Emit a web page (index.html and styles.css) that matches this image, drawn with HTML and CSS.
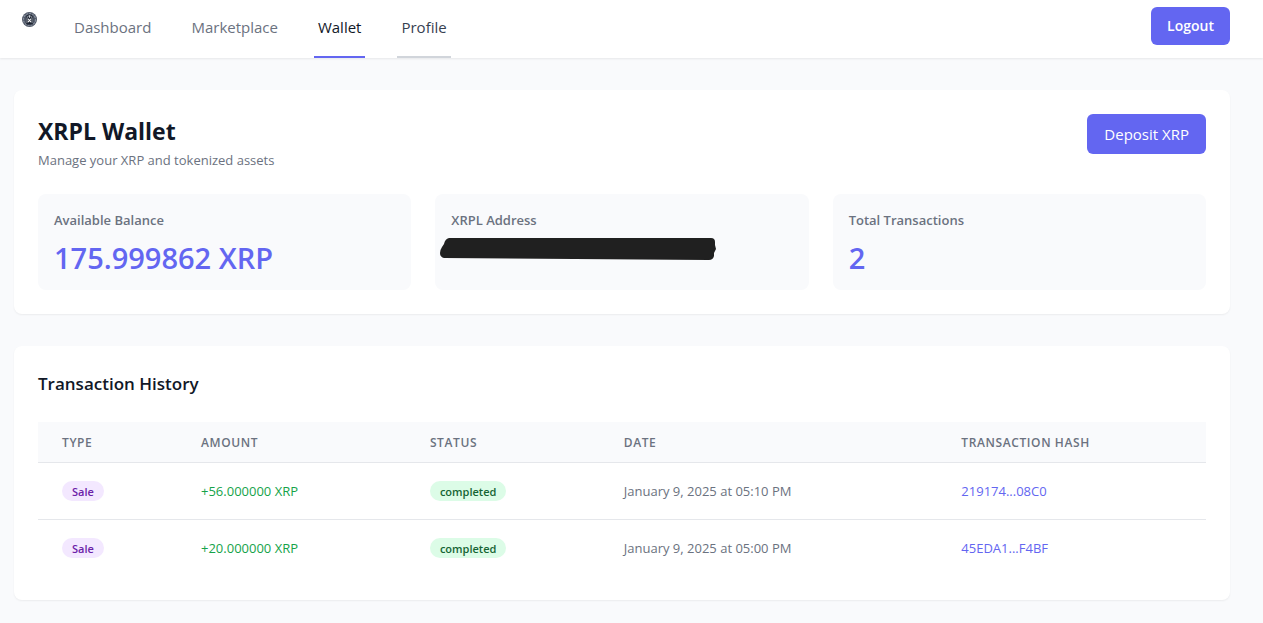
FILE: index.html
```html
<!DOCTYPE html>
<html lang="en">
<head>
<meta charset="utf-8">
<meta name="viewport" content="width=device-width, initial-scale=1">
<title>XRPL Wallet</title>
<link rel="stylesheet" href="styles.css">
</head>
<body>
<header class="topbar">
  <svg class="logo" viewBox="0 0 16 16" role="img" aria-label="Home">
    <circle cx="8" cy="8" r="8" fill="#4a5261"/>
    <circle cx="8" cy="8" r="6.4" fill="none" stroke="#858d9b" stroke-width="1.4" stroke-dasharray="2.4 .8"/>
    <path d="M4.3 13V6.2Q4.8 2.6 8 2.6t3.7 3.6V13z" fill="#1c2330"/>
    <path d="M5.3 12V6.5Q5.6 4 8 4t2.7 2.5V12" fill="none" stroke="#b6bcc6" stroke-width=".8"/>
    <path d="M8 3.6v2.6" stroke="#d5d9e0" stroke-width="1"/>
    <path d="M6.4 7.2l3.2 3.6M9.6 7.2l-3.2 3.6" stroke="#fff" stroke-width="1.1"/>
    <path d="M5.6 12.6h4.8" stroke="#1c2330" stroke-width="1.2"/>
  </svg>
  <nav class="nav">
    <a class="nav-link" href="#">Dashboard</a>
    <a class="nav-link" href="#">Marketplace</a>
    <a class="nav-link nav-link-active" href="#" aria-current="page">Wallet</a>
    <a class="nav-link nav-link-hover" href="#">Profile</a>
  </nav>
  <button class="button button-small" type="button">Logout</button>
</header>
<main class="content">
  <section class="card">
    <div class="card-head">
      <div>
        <h1 class="title">XRPL Wallet</h1>
        <p class="subtitle">Manage your XRP and tokenized assets</p>
      </div>
      <button class="button" type="button">Deposit XRP</button>
    </div>
    <div class="stats">
      <div class="stat">
        <h2 class="stat-label">Available Balance</h2>
        <p class="stat-value">175.999862 XRP</p>
      </div>
      <div class="stat">
        <h2 class="stat-label">XRPL Address</h2>
        <svg class="redaction" viewBox="0 0 276 22" role="img" aria-label="Address hidden">
          <path d="M9 0H271Q275 0 275 4V7L276 11L274 15V18Q273 22 269 22L4 20Q0 19 0 15Q0 12 2 9L4 6Q5 1 9 0Z" fill="#202020"/>
        </svg>
      </div>
      <div class="stat">
        <h2 class="stat-label">Total Transactions</h2>
        <p class="stat-value">2</p>
      </div>
    </div>
  </section>
  <section class="card">
    <h2 class="section-title">Transaction History</h2>
    <table class="table">
      <colgroup><col class="col-type"><col class="col-amount"><col class="col-status"><col class="col-date"><col class="col-hash"></colgroup>
      <thead>
        <tr><th scope="col">Type</th><th scope="col">Amount</th><th scope="col">Status</th><th scope="col">Date</th><th scope="col">Transaction Hash</th></tr>
      </thead>
      <tbody>
        <tr>
          <td><span class="badge badge-sale">Sale</span></td>
          <td class="amount">+56.000000 XRP</td>
          <td><span class="badge badge-completed">completed</span></td>
          <td>January 9, 2025 at 05:10 PM</td>
          <td><a class="hash" href="#">219174...08C0</a></td>
        </tr>
        <tr>
          <td><span class="badge badge-sale">Sale</span></td>
          <td class="amount">+20.000000 XRP</td>
          <td><span class="badge badge-completed">completed</span></td>
          <td>January 9, 2025 at 05:00 PM</td>
          <td><a class="hash" href="#">45EDA1...F4BF</a></td>
        </tr>
      </tbody>
    </table>
  </section>
</main>
</body>
</html>
```

FILE: styles.css
```css
* { box-sizing: border-box; }
body {
  margin: 0;
  background: #f9fafc;
  color: #111827;
  font-family: "Segoe UI", "Open Sans", "Noto Sans", sans-serif;
  font-size: 13px;
  line-height: 20px;
}
h1, h2, p { margin: 0; }
a { text-decoration: none; }

.topbar {
  display: flex;
  align-items: flex-start;
  padding: 0 33px 0 22px;
  background: #fff;
  box-shadow: 0 1px 2px rgba(0, 0, 0, .08);
}
.logo { width: 15px; height: 15px; margin-top: 12px; }
.nav { display: flex; gap: 32px; margin: 0 auto 0 33px; }
.nav-link {
  padding: 15px 4px 17px;
  border-bottom: 2px solid transparent;
  color: #6b7280;
  font-size: 15px;
  line-height: 24px;
}
.nav-link-active { border-color: #6366f1; color: #111827; }
.nav-link-hover { border-color: #d1d5db; color: #374151; }

.button {
  padding: 8px 17px;
  border: 0;
  border-radius: 6px;
  background: #6366f1;
  color: #fff;
  font: 400 15px/24px "Segoe UI", "Open Sans", "Noto Sans", sans-serif;
  white-space: nowrap;
}
.button-small { margin-top: 7px; padding: 9px 16px; font-size: 14px; font-weight: 600; line-height: 20px; }

.content { display: grid; gap: 32px; padding: 32px 33px 23px 14px; }
.card {
  padding: 24px;
  border-radius: 8px;
  background: #fff;
  box-shadow: 0 1px 2px rgba(0, 0, 0, .06);
}
.card-head { display: flex; justify-content: space-between; align-items: flex-start; margin-bottom: 24px; }
.title { margin-bottom: 2px; font-size: 23px; font-weight: 700; line-height: 34px; }
.subtitle { color: #6b7280; }
.stats { display: grid; grid-template-columns: repeat(3, 1fr); gap: 24px; }
.stat { position: relative; padding: 16px 16px 12px; border-radius: 8px; background: #f9fafc; }
.stat-label { color: #6b7280; font-size: 13px; font-weight: 600; }
.stat-value { margin-top: 8px; color: #6366f1; font-size: 29px; font-weight: 600; line-height: 40px; }
.redaction { position: absolute; top: 44px; left: 5px; width: 276px; height: 22px; }

.section-title { margin-bottom: 24px; font-size: 17px; font-weight: 600; line-height: 28px; }
.table { width: 100%; border-collapse: separate; border-spacing: 0; table-layout: fixed; }
.col-type { width: 11.9%; }
.col-amount { width: 19.6%; }
.col-status { width: 16.6%; }
.col-date { width: 28.9%; }
.col-hash { width: 23%; }
.table th {
  padding: 13px 24px 11px;
  border-bottom: 1px solid #e5e7eb;
  background: #f9fafc;
  color: #6b7280;
  font-size: 12px;
  font-weight: 600;
  line-height: 16px;
  letter-spacing: .05em;
  text-align: left;
  text-transform: uppercase;
}
.table td { height: 57px; padding: 0 24px; border-bottom: 1px solid #e5e7eb; color: #6b7280; white-space: nowrap; }
.table tbody tr:last-child td { height: 56px; border-bottom: 0; }
.table .amount { color: #16a34a; }
.hash { color: #6366f1; }
.badge { display: block; width: fit-content; padding: 3px 10px 1px; border-radius: 10px; font-size: 11px; font-weight: 600; line-height: 16px; }
.badge-sale { background: #f3e8ff; color: #6b21a8; }
.badge-completed { background: #dcfce7; color: #166534; }
```
